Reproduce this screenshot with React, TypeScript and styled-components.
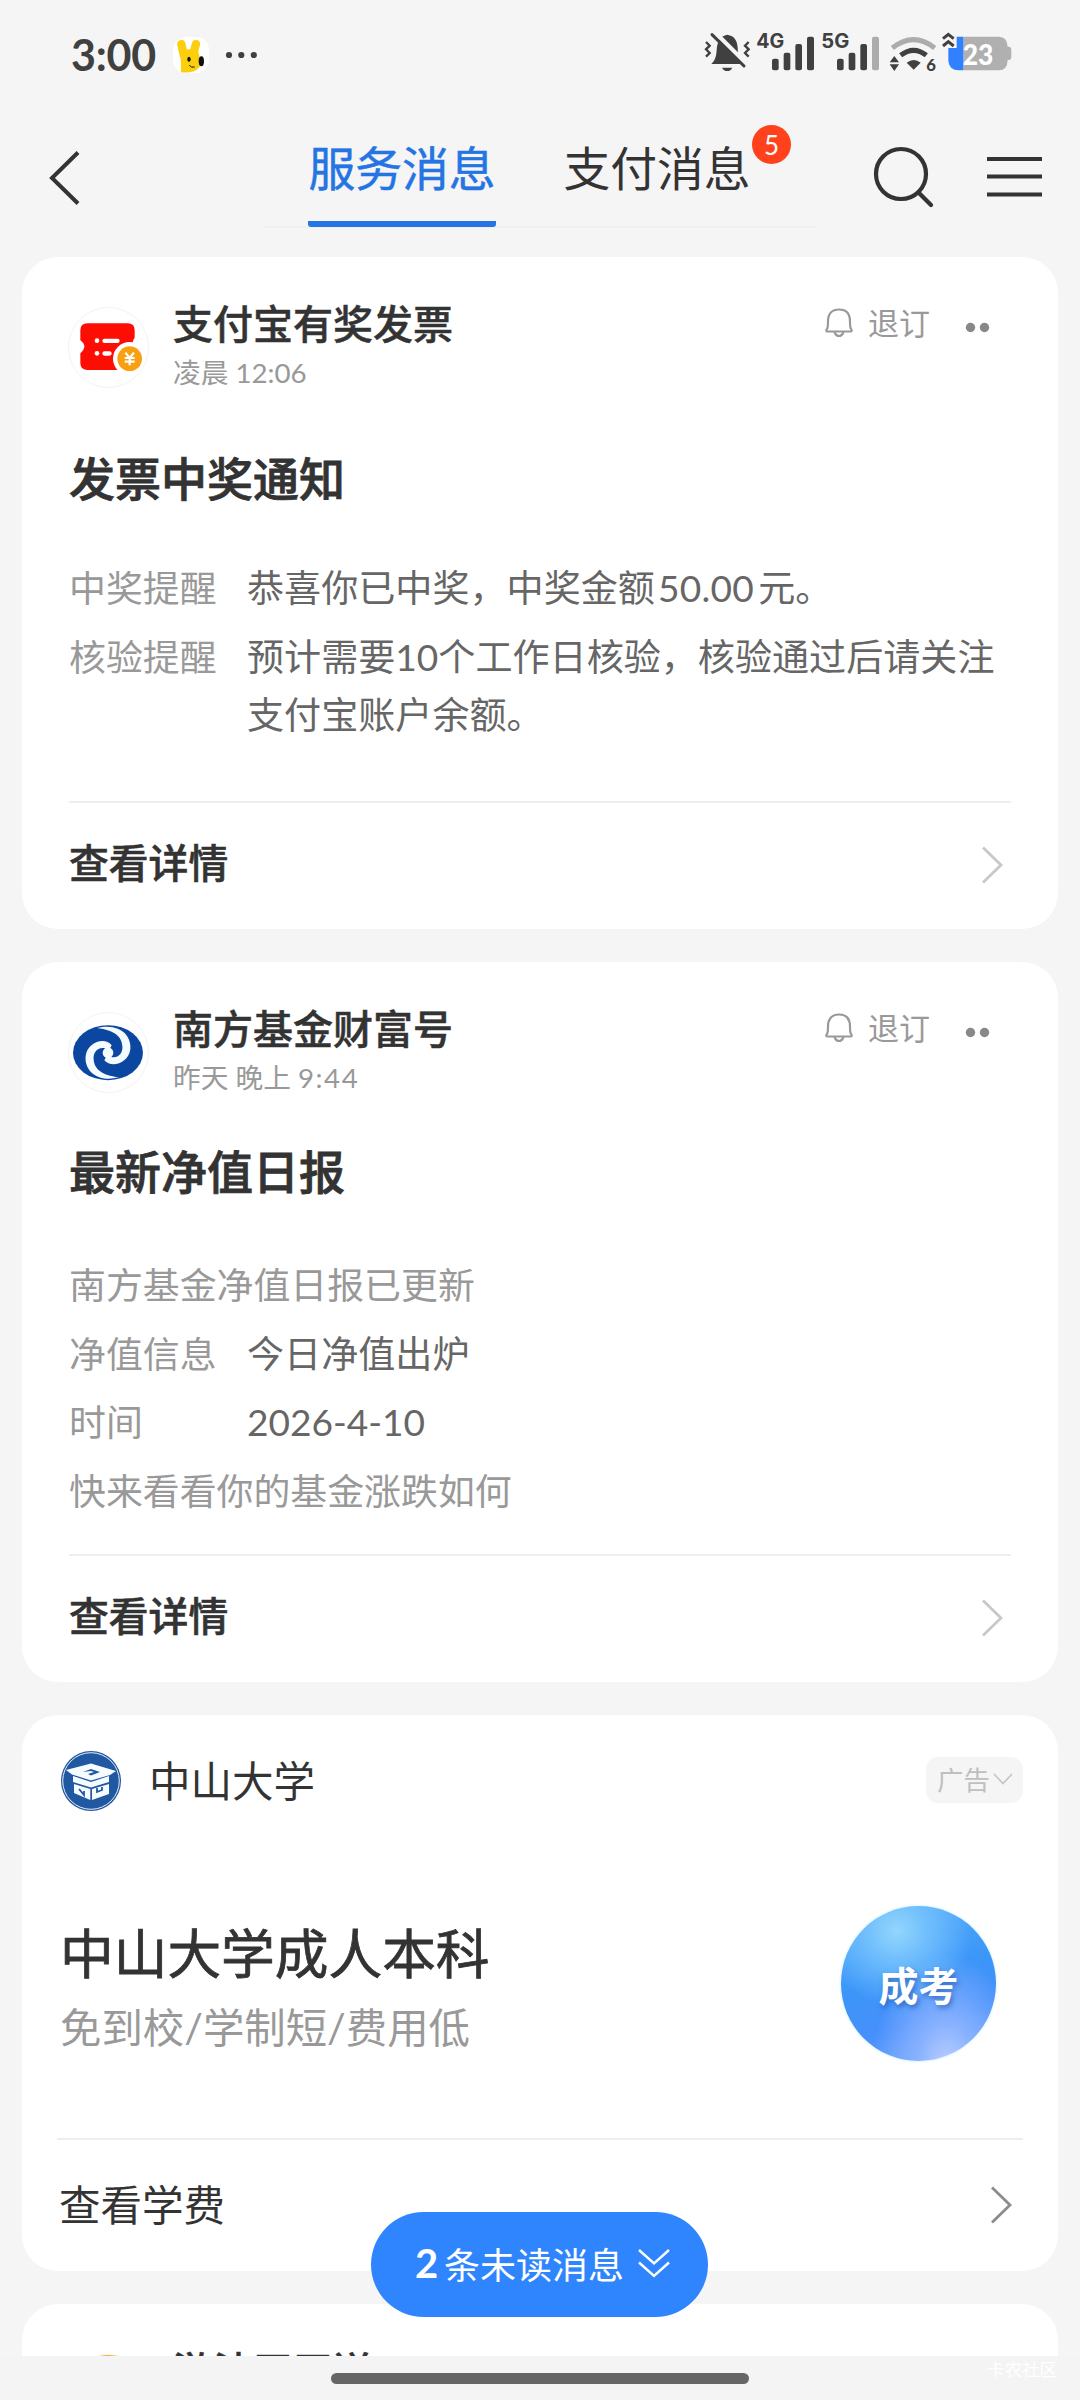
import React from 'react';
import styled, { createGlobalStyle } from 'styled-components';

const GlobalStyle = createGlobalStyle`
  html, body { margin: 0; padding: 0; background: #f5f5f5; }
  * { box-sizing: border-box; }
  body { font-family: Lato, "Noto Sans CJK SC", sans-serif; color: #333; }
  svg { display: block; flex: none; }
`;

const Page = styled.div`
  position: relative;
  width: 1080px;
  height: 2400px;
  display: flex;
  flex-direction: column;
  overflow: hidden;
  background: #f5f5f5;
`;

/* ---------- status bar ---------- */
const StatusBar = styled.div`
  height: 110px;
  padding: 20px 48px 0 71px;
  display: flex;
  justify-content: space-between;
  align-items: flex-start;
  color: #404040;
`;
const StatusLeft = styled.div`
  display: flex;
  align-items: center;
  height: 70px;
`;
const Clock = styled.span`
  font-size: 43px;
  font-weight: 700;
  line-height: 70px;
  letter-spacing: -0.2px;
  width: 102px;
`;
const AppBadge = styled.span`
  width: 36px;
  height: 36px;
  border-radius: 13px;
  background: #fff;
  margin-right: 16px;
`;
const StatusRight = styled.div`
  display: flex;
  height: 70px;
`;

/* ---------- navigation ---------- */
const Nav = styled.div`
  height: 147px;
  display: flex;
  align-items: flex-start;
`;
const BackArea = styled.div`
  flex: none;
  width: 264px;
  padding: 40px 0 0 46px;
`;
const Tabs = styled.div`
  flex: none;
  width: 552px;
  height: 118px;
  padding-left: 44px;
  display: flex;
  gap: 67px;
  border-bottom: 2px solid #f0f0f0;
`;
const Tab = styled.div<{ $active?: boolean }>`
  position: relative;
  width: 188px;
  height: 117px;
  padding-top: 28px;
  border-bottom: 6px solid ${(p) => (p.$active ? '#2475e3' : 'transparent')};
  border-radius: 3px;
  font-size: 46.8px;
  line-height: 60px;
  white-space: nowrap;
  text-align: center;
  color: ${(p) => (p.$active ? '#2475e3' : '#333')};
  -webkit-text-stroke: ${(p) => (p.$active ? '0.5px #2475e3' : '0')};
`;
const CountBadge = styled.span`
  position: absolute;
  left: 189px;
  top: 15px;
  width: 39px;
  height: 39px;
  border-radius: 50%;
  background: #ff411c;
  color: #fff;
  font-size: 26px;
  line-height: 40px;
  text-align: center;
`;
const NavActions = styled.div`
  display: flex;
  padding: 32px 0 0 56px;
  gap: 49px;
`;

/* ---------- cards ---------- */
const List = styled.div`
  height: 2099px;
  padding: 0 22px;
  display: flex;
  flex-direction: column;
  gap: 33px;
  overflow: hidden;
`;
const Card = styled.section<{ $h: number }>`
  flex: none;
  height: ${(p) => p.$h}px;
  border-radius: 36px;
  background: #fff;
  display: flex;
  flex-direction: column;
  overflow: hidden;
`;
const CardHead = styled.div`
  flex: none;
  display: flex;
  padding: 44px 46px 0;
`;
const Avatar = styled.div`
  width: 81px;
  height: 81px;
  margin: 6px 24px 0 0;
  border-radius: 50%;
  border: 1px solid #f3f3f3;
  overflow: hidden;
`;
const Sender = styled.div`
  flex: 1;
  display: flex;
  flex-direction: column;
  gap: 10px;
`;
const SenderName = styled.div`
  font-size: 40px;
  line-height: 46px;
  font-weight: 500;
  color: #333;
  -webkit-text-stroke: 0.5px #333;
`;
const SenderTime = styled.div`
  font-size: 27.7px;
  line-height: 32px;
  color: #999;
`;
const Digits = styled.span<{ $gap: number }>`
  letter-spacing: ${(p) => p.$gap}px;
`;
const HeadActions = styled.div`
  display: flex;
  align-items: flex-start;
  padding-right: 21px;
  color: #999;
`;
const Unsubscribe = styled.span`
  font-size: 31px;
  line-height: 45px;
  margin: 0 35px 0 15px;
`;
const Heading = styled.h2<{ $top: number }>`
  margin: ${(p) => p.$top}px 47px 0;
  font-size: 46px;
  line-height: 60px;
  font-weight: 500;
  color: #333;
  -webkit-text-stroke: 0.8px #333;
`;
const Rows = styled.div<{ $top: number }>`
  flex: 1;
  margin: ${(p) => p.$top}px 47px 0;
  display: flex;
  flex-direction: column;
  gap: 10.7px;
  font-size: 36.9px;
  line-height: 58px;
`;
const Row = styled.div`
  display: flex;
`;
const Label = styled.div`
  width: 178px;
  color: #999;
`;
const Note = styled.div`
  color: #999;
`;
const Value = styled.div`
  flex: 1;
  color: #666;
  font-size: 37.1px;
`;
const Amount = styled.span`
  margin: 0 4px 0 3px;
  letter-spacing: 0.3px;
`;
const CardFoot = styled.div<{ $ad?: boolean }>`
  flex: none;
  height: ${(p) => (p.$ad ? 133 : 128)}px;
  margin: 0 ${(p) => (p.$ad ? 35 : 47)}px;
  padding-left: ${(p) => (p.$ad ? 2 : 0)}px;
  padding-right: ${(p) => (p.$ad ? 10 : 7)}px;
  border-top: 2px solid #eee;
  display: flex;
  justify-content: space-between;
  align-items: flex-start;
  font-size: ${(p) => (p.$ad ? 41.5 : 39.8)}px;
  font-weight: ${(p) => (p.$ad ? 400 : 500)};
  line-height: ${(p) => (p.$ad ? 130 : 120)}px;
  -webkit-text-stroke: ${(p) => (p.$ad ? 0 : 0.6)}px #333;
  color: #333;
`;
const FootIcon = styled.span<{ $top: number }>`
  padding-top: ${(p) => p.$top}px;
`;

/* ---------- advert ---------- */
const AdHead = styled.div`
  flex: none;
  display: flex;
  align-items: center;
  height: 60px;
  margin: 36px 35px 0 39px;
`;
const AdName = styled.div`
  flex: 1;
  padding-left: 28px;
  font-size: 41.5px;
  line-height: 60px;
`;
const AdTag = styled.div`
  width: 97px;
  height: 46px;
  margin-bottom: 2px;
  border-radius: 12px;
  background: #f5f5f5;
  color: #bfbfbf;
  display: flex;
  align-items: center;
  padding: 0 0 3px 11px;
  gap: 3px;
  font-size: 26.5px;
`;
const AdBody = styled.div`
  flex: 1;
  display: flex;
  justify-content: space-between;
  padding: 95px 62px 0 38px;
`;
const AdTitle = styled.div`
  padding: 12px 0 0;
  font-size: 53.7px;
  line-height: 70px;
  font-weight: 400;
  -webkit-text-stroke: 0.8px #333;
`;
const AdSub = styled.div`
  padding-top: 14px;
  font-size: 41.4px;
  line-height: 50px;
  color: #999;
`;
const Ball = styled.div`
  width: 155px;
  height: 155px;
  border-radius: 50%;
  display: flex;
  align-items: center;
  justify-content: center;
  padding-top: 1px;
  color: #fff;
  font-size: 40px;
  font-weight: 700;
  text-shadow: 2px 3px 5px rgba(20, 70, 160, 0.55);
  box-shadow: 0 0 3px rgba(150, 220, 255, 0.6);
  background:
    radial-gradient(circle at 36% 16%, #93d6fd 0%, rgba(120, 196, 253, 0.85) 18%, rgba(90, 170, 252, 0) 46%),
    radial-gradient(ellipse at 68% 104%, #bccfff 0%, rgba(140, 180, 255, 0.9) 20%, rgba(90, 150, 252, 0) 50%),
    linear-gradient(165deg, #56aefb 0%, #3c96f8 45%, #468ffb 70%, #6aa2ff 100%);
`;

/* ---------- bottom ---------- */
const Pill = styled.div`
  position: absolute;
  left: 371px;
  top: 2212px;
  width: 337px;
  height: 105px;
  border-radius: 53px;
  background: #2f85fe;
  color: #fff;
  display: flex;
  align-items: center;
  padding: 0 0 3px 44px;
  font-size: 36px;
  white-space: nowrap;
`;
const PillCount = styled.b`
  font-size: 40px;
  font-weight: 700;
  width: 29px;
`;
const PillText = styled.span`
  width: 193px;
`;
const BottomBar = styled.div`
  position: relative;
  height: 44px;
  display: flex;
  justify-content: center;
  padding-top: 17px;
  background: #f4f4f4;
`;
const HomeBar = styled.div`
  width: 418px;
  height: 11px;
  border-radius: 6px;
  background: #666;
`;
const Watermark = styled.span`
  position: absolute;
  right: 23px;
  top: 3px;
  font-size: 17.5px;
  line-height: 22px;
  color: #fff;
`;

const Mascot = () => (
  <svg width="36" height="36" viewBox="399 51 108 108">
    <path d="M424 72L432 108M468 72L458 108" stroke="#fccf0e" strokeWidth="25" strokeLinecap="round" />
    <path d="M422 92Q446 84 474 92L484 130Q480 146 462 154Q440 160 423 156Z" fill="#fccf0e" />
    <ellipse cx="484" cy="124" rx="8" ry="15" fill="#111" />
    <ellipse cx="447" cy="118" rx="5" ry="7.5" fill="#111" />
    <path d="M448 136Q454 144 464 141" fill="none" stroke="#111" strokeWidth="3" />
  </svg>
);

const MoreDots = () => (
  <svg width="34" height="8" viewBox="0 0 34 8" fill="#404040">
    <circle cx="4" cy="4" r="3.1" />
    <circle cx="16.3" cy="4" r="3.1" />
    <circle cx="28.8" cy="4" r="3.1" />
  </svg>
);

const MutedBell = () => (
  <svg width="65" height="70" viewBox="0 0 195 210">
    <path
      d="M112 44C134 48 142 62 143 84L144 100Q147 118 160 132L64 132C76 120 79 108 80 90C82 64 90 48 112 44Z"
      fill="#404040"
    />
    <path d="M96 143H127Q122 153 112 153Q101 153 96 143Z" fill="#404040" />
    <path d="M74 36L170 132" stroke="#f5f5f5" strokeWidth="13" />
    <path d="M66 44L162 138" stroke="#404040" strokeWidth="9" strokeLinecap="round" />
    <path
      d="M48 66L59 77L48 88L59 99L48 110M176 66L165 77L176 88L165 99L176 110"
      fill="none"
      stroke="#404040"
      strokeWidth="7"
    />
  </svg>
);

const Signal = ({ label, last }: { label: string; last: string }) => (
  <svg width="65" height="70" viewBox="195 0 195 210" fill="#404040">
    <text x="199" y="83" fontSize="59" fontWeight="700" fontFamily="Inter, sans-serif" textLength="84" lengthAdjust="spacingAndGlyphs">
      {label}
    </text>
    <rect x="246" y="116" width="20" height="35" rx="6" />
    <rect x="281" y="98" width="20" height="53" rx="6" />
    <rect x="316" y="72" width="20" height="79" rx="6" />
    <rect x="351" y="50" width="21" height="101" rx="6" fill={last} />
  </svg>
);

const Wifi = () => (
  <svg width="57" height="70" viewBox="585 0 171 210">
    <path d="M607 84Q671 34 734 84" fill="none" stroke="#acacac" strokeWidth="15" />
    <path d="M632 106Q671 76 709 106" fill="none" stroke="#404040" strokeWidth="15" />
    <path d="M650 128Q671 112 692 128L671 149Z" fill="#404040" />
    <path d="M599 127L613 108L627 127ZM599 133L613 153L627 133Z" fill="#404040" />
    <text x="709" y="153" fontSize="50" fontWeight="900" fontFamily="Lato, sans-serif" fill="#404040">
      6
    </text>
  </svg>
);

const Battery = () => (
  <svg width="90" height="70" viewBox="756 0 270 210">
    <path d="M820 50H926Q952 50 953 80H958Q964 82 964 88V112Q964 118 958 120H953Q952 151 926 151H820Z" fill="#b0b0b0" />
    <path d="M820 50H800V84H775V122Q778 151 806 151H820Z" fill="#3080ff" />
    <path d="M759 56L775 43L791 56M759 78L775 65L791 78" fill="none" stroke="#404040" strokeWidth="9" />
    <text
      x="818"
      y="134"
      fontSize="88"
      fontWeight="900"
      fontFamily="Lato, sans-serif"
      fill="#fff"
      textLength="92"
      lengthAdjust="spacingAndGlyphs"
    >
      23
    </text>
  </svg>
);

const BackIcon = () => (
  <svg width="36" height="56" viewBox="0 0 36 56" fill="none" stroke="#333" strokeWidth="4">
    <path d="M32 2.5L6 28L32 53.5" />
  </svg>
);
const SearchIcon = () => (
  <svg width="64" height="70" viewBox="0 0 64 70" fill="none" stroke="#333" strokeWidth="4.2">
    <circle cx="29" cy="32" r="25" />
    <path d="M47 51L59 63" strokeLinecap="round" />
  </svg>
);
const MenuIcon = () => (
  <svg width="58" height="70" viewBox="0 0 58 70" stroke="#333" strokeWidth="4.2">
    <path d="M2 17H57M2 34.5H57M2 52.5H57" />
  </svg>
);

const BellIcon = () => (
  <svg width="28" height="46" viewBox="0 0 28 46" fill="none" stroke="#999" strokeWidth="2.2">
    <path d="M2.5 30.5C1 30.5 1 29 2 28C3 26.500 3 25 3 20.500C3 12.500 7 8.500 14 8.500C21 8.500 25 12.500 25 20.500C25 25 25 26.500 26 28C27 29 27 30.500 25.500 30.500Z" />
    <path d="M9.5 31Q11 35 14 35Q17 35 18.5 31" />
  </svg>
);
const TwoDots = () => (
  <svg width="26" height="54" viewBox="0 0 26 54" fill="#888">
    <circle cx="5.5" cy="26.5" r="4.7" />
    <circle cx="19.5" cy="26.5" r="4.7" />
  </svg>
);
const Chevron = ({ color }: { color: string }) => (
  <svg width="24" height="38" viewBox="0 0 24 38" fill="none" stroke={color} strokeWidth="2.8">
    <path d="M3 1.5L21 19L3 36.5" />
  </svg>
);

const TicketLogo = () => (
  <svg width="79" height="79" viewBox="148 173 237 237">
    <path
      d="M204 219H324Q345 219 345 240V262Q338 270 338 288L345 300V359H204Q182 359 182 338V309Q194 298 194 288Q194 279 182 270V240Q182 219 204 219Z"
      fill="#fe0d05"
    />
    <g fill="#fff">
      <circle cx="232" cy="271" r="7" />
      <circle cx="232" cy="309" r="7" />
      <rect x="248" y="265" width="52" height="13" rx="6.5" />
      <rect x="248" y="303" width="28" height="13" rx="6.5" />
      <circle cx="330" cy="325" r="50" />
    </g>
    <circle cx="330" cy="325" r="37" fill="#f8a012" />
    <path d="M317 307L330 323L343 307M330 323V345M315 323H345M315 334H345" fill="none" stroke="#fff" strokeWidth="6.5" />
  </svg>
);

const whiteArm =
  'M232 190C300 174 337 212 332 250C326 288 276 304 254 280L262 266C290 282 311 262 308 240C306 214 285 196 232 190Z';
const FundLogo = () => (
  <svg width="79" height="79" viewBox="148 148 237 221" preserveAspectRatio="none">
    <ellipse cx="265" cy="259" rx="105" ry="77" fill="#0b47a1" />
    <g fill="#f4fbff">
      <path d={whiteArm} />
      <path d={whiteArm} transform="rotate(180 265 259)" />
      <ellipse cx="265" cy="259" rx="16" ry="15" />
    </g>
  </svg>
);

const UniversityLogo = () => (
  <svg width="60" height="60" viewBox="0 0 60 60">
    <circle cx="30" cy="30" r="30" fill="#2058a2" />
    <circle cx="30" cy="30" r="28.3" fill="none" stroke="#fff" strokeWidth="0.9" />
    <g fill="#f6fbff">
      <path d="M5 19L30 12.5L55 20L49 24L30 29.5L11 23.5Z" />
      <path d="M12 25L30 31L48 25V31L30 36.500L12 31Z" />
      <path d="M13 33L29.300 38V49L13 42ZM31 38L48 33V43L31 49Z" />
    </g>
    <path d="M22 21L30 18L39 21L30 24.500L27 23L33 21L30 20Z" fill="#2058a2" />
    <path d="M18 38L23 44V40M36 37V41L41 39V36" fill="none" stroke="#2058a2" strokeWidth="1.800" />
  </svg>
);

const TagChevron = () => (
  <svg width="20" height="12" viewBox="0 0 20 12" fill="none" stroke="#c4c4c4" strokeWidth="1.6">
    <path d="M1 1L10 10.500L19 1" />
  </svg>
);
const DoubleDown = () => (
  <svg width="34" height="30" viewBox="0 0 34 30" fill="none" stroke="#fff" strokeWidth="2.4">
    <path d="M2 2L17 15.500L32 2M2 14.500L17 28L32 14.500" />
  </svg>
);
const OrangeLogo = () => (
  <svg width="79" height="79" viewBox="0 0 79 79">
    <circle cx="39" cy="22" r="24" fill="#f6b13c" />
  </svg>
);

type HeaderProps = { logo: React.ReactNode; name: string; time?: React.ReactNode };
const MessageHeader = ({ logo, name, time }: HeaderProps) => (
  <CardHead>
    <Avatar>{logo}</Avatar>
    <Sender>
      <SenderName>{name}</SenderName>
      {time && <SenderTime>{time}</SenderTime>}
    </Sender>
    {time && (
      <HeadActions>
        <BellIcon />
        <Unsubscribe>退订</Unsubscribe>
        <TwoDots />
      </HeadActions>
    )}
  </CardHead>
);

export default function App() {
  return (
    <Page>
      <GlobalStyle />
      <StatusBar>
        <StatusLeft>
          <Clock>3:00</Clock>
          <AppBadge>
            <Mascot />
          </AppBadge>
          <MoreDots />
        </StatusLeft>
        <StatusRight>
          <MutedBell />
          <Signal label="4G" last="#404040" />
          <Signal label="5G" last="#acacac" />
          <Wifi />
          <Battery />
        </StatusRight>
      </StatusBar>

      <Nav>
        <BackArea>
          <BackIcon />
        </BackArea>
        <Tabs>
          <Tab $active>服务消息</Tab>
          <Tab>
            支付消息
            <CountBadge>5</CountBadge>
          </Tab>
        </Tabs>
        <NavActions>
          <SearchIcon />
          <MenuIcon />
        </NavActions>
      </Nav>

      <List>
        <Card $h={672}>
          <MessageHeader logo={<TicketLogo />} name="支付宝有奖发票" time="凌晨 12:06" />
          <Heading $top={60}>发票中奖通知</Heading>
          <Rows $top={50}>
            <Row>
              <Label>中奖提醒</Label>
              <Value>
                恭喜你已中奖，中奖金额<Amount>50.00</Amount>元。
              </Value>
            </Row>
            <Row>
              <Label>核验提醒</Label>
              <Value>预计需要10个工作日核验，核验通过后请关注支付宝账户余额。</Value>
            </Row>
          </Rows>
          <CardFoot>
            查看详情
            <FootIcon $top={43}>
              <Chevron color="#c8c8c8" />
            </FootIcon>
          </CardFoot>
        </Card>

        <Card $h={720}>
          <MessageHeader
            logo={<FundLogo />}
            name="南方基金财富号"
            time={
              <>
                昨天 晚上 <Digits $gap={1.6}>9:44</Digits>
              </>
            }
          />
          <Heading $top={48}>最新净值日报</Heading>
          <Rows $top={54}>
            <Note>南方基金净值日报已更新</Note>
            <Row>
              <Label>净值信息</Label>
              <Value>今日净值出炉</Value>
            </Row>
            <Row>
              <Label>时间</Label>
              <Value>2026-4-10</Value>
            </Row>
            <Note>快来看看你的基金涨跌如何</Note>
          </Rows>
          <CardFoot>
            查看详情
            <FootIcon $top={43}>
              <Chevron color="#c8c8c8" />
            </FootIcon>
          </CardFoot>
        </Card>

        <Card $h={556}>
          <AdHead>
            <UniversityLogo />
            <AdName>中山大学</AdName>
            <AdTag>
              广告
              <TagChevron />
            </AdTag>
          </AdHead>
          <AdBody>
            <div>
              <AdTitle>中山大学成人本科</AdTitle>
              <AdSub>免到校/学制短/费用低</AdSub>
            </div>
            <Ball>成考</Ball>
          </AdBody>
          <CardFoot $ad>
            查看学费
            <FootIcon $top={46}>
              <Chevron color="#8c8c8c" />
            </FootIcon>
          </CardFoot>
        </Card>

        <Card $h={300}>
          <MessageHeader logo={<OrangeLogo />} name="游法天天送" />
        </Card>
      </List>

      <BottomBar>
        <HomeBar />
        <Watermark>卡农社区</Watermark>
      </BottomBar>

      <Pill>
        <PillCount>2</PillCount>
        <PillText>条未读消息</PillText>
        <DoubleDown />
      </Pill>
    </Page>
  );
}
